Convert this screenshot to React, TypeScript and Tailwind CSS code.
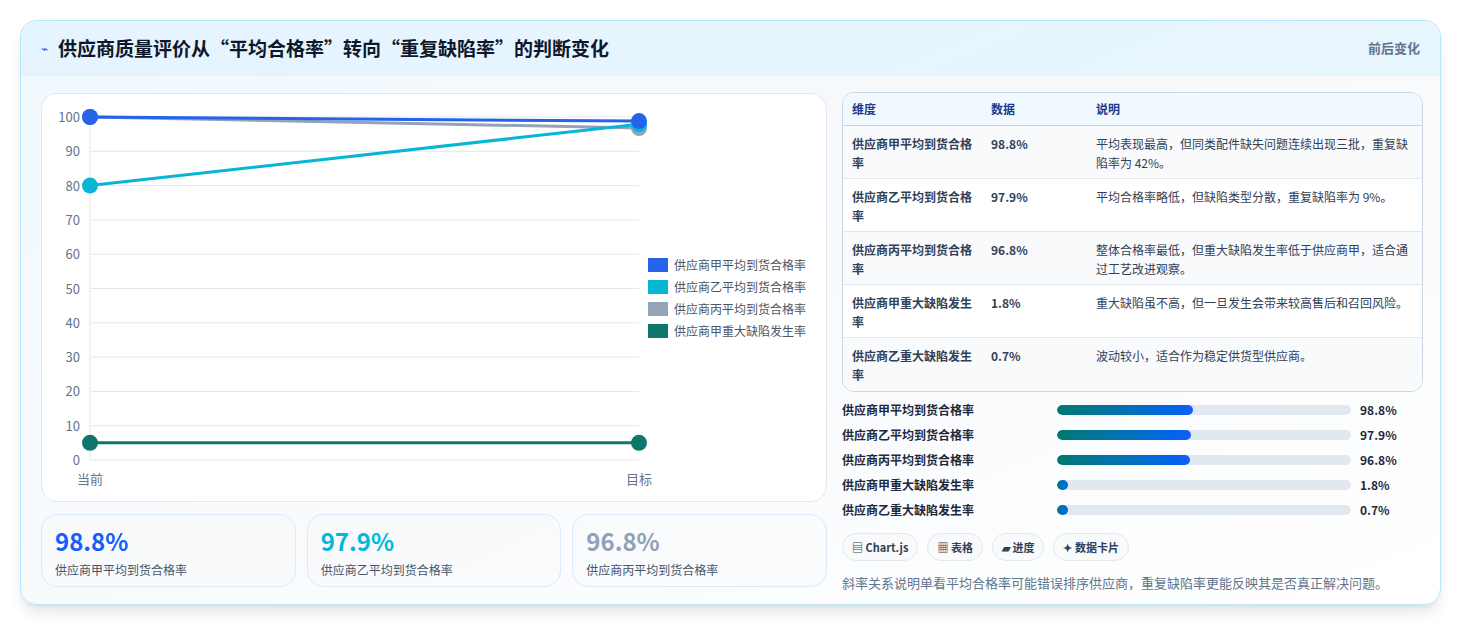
const FONT = { fontFamily: '"Noto Sans CJK SC", "Noto Sans", sans-serif' };

const rows = [
    { name: '供应商甲平均到货合格率', value: '98.8%', note: '平均表现最高，但同类配件缺失问题连续出现三批，重复缺陷率为 42%。' },
    { name: '供应商乙平均到货合格率', value: '97.9%', note: '平均合格率略低，但缺陷类型分散，重复缺陷率为 9%。' },
    { name: '供应商丙平均到货合格率', value: '96.8%', note: '整体合格率最低，但重大缺陷发生率低于供应商甲，适合通过工艺改进观察。' },
    { name: '供应商甲重大缺陷发生率', value: '1.8%', note: '重大缺陷虽不高，但一旦发生会带来较高售后和召回风险。' },
    { name: '供应商乙重大缺陷发生率', value: '0.7%', note: '波动较小，适合作为稳定供货型供应商。' },
];

const bars = [
    { name: '供应商甲平均到货合格率', value: '98.8%', w: 46.3 },
    { name: '供应商乙平均到货合格率', value: '97.9%', w: 45.6 },
    { name: '供应商丙平均到货合格率', value: '96.8%', w: 45.2 },
    { name: '供应商甲重大缺陷发生率', value: '1.8%', w: 3.8 },
    { name: '供应商乙重大缺陷发生率', value: '0.7%', w: 3.8 },
];

const legend = [
    { c: '#2563eb', t: '供应商甲平均到货合格率' },
    { c: '#06b6d4', t: '供应商乙平均到货合格率' },
    { c: '#94a3b8', t: '供应商丙平均到货合格率' },
    { c: '#0f766e', t: '供应商甲重大缺陷发生率' },
];

function Chart() {
    const x0 = 48, x1 = 597;
    const y = (v: number) => 366 - v * 3.43;
    return (
        <svg width="786" height="408" className="block">
            {[0, 10, 20, 30, 40, 50, 60, 70, 80, 90, 100].map(v => (
                <g key={v}>
                    <line x1={x0} x2={x1} y1={y(v)} y2={y(v)} stroke="#e5e7eb" />
                    <text x={x0 - 10} y={y(v) + 5} textAnchor="end" fontSize="13" fill="#64748b">{v}</text>
                </g>
            ))}
            <line x1={x0} x2={x0} y1={y(100)} y2={y(0)} stroke="#e5e7eb" />
            <text x={x0} y={390} textAnchor="middle" fontSize="13" fill="#64748b">当前</text>
            <text x={x1} y={390} textAnchor="middle" fontSize="13" fill="#64748b">目标</text>
            <line x1={x0} x2={x1} y1={y(100)} y2={y(96.8)} stroke="#94a3b8" strokeWidth="3" />
            <line x1={x0} x2={x1} y1={y(80)} y2={y(97.9)} stroke="#06b6d4" strokeWidth="3" />
            <line x1={x0} x2={x1} y1={y(100)} y2={y(98.8)} stroke="#2563eb" strokeWidth="3" />
            <line x1={x0} x2={x1} y1={y(5)} y2={y(5)} stroke="#0f766e" strokeWidth="3" />
            <circle cx={x1} cy={y(96.8)} r="8" fill="#94a3b8" />
            <circle cx={x1} cy={y(97.9)} r="8" fill="#06b6d4" />
            <circle cx={x0} cy={y(100)} r="8" fill="#94a3b8" />
            <circle cx={x0} cy={y(80)} r="8" fill="#06b6d4" />
            <circle cx={x0} cy={y(100)} r="8" fill="#2563eb" />
            <circle cx={x1} cy={y(98.8)} r="8" fill="#2563eb" />
            <circle cx={x0} cy={y(5)} r="8" fill="#0f766e" />
            <circle cx={x1} cy={y(5)} r="8" fill="#0f766e" />
            {legend.map((l, i) => (
                <g key={l.t}>
                    <rect x={606} y={164 + i * 22} width={20} height={14} fill={l.c} />
                    <text x={632} y={176 + i * 22} fontSize="12" fill="#4b5563">{l.t}</text>
                </g>
            ))}
        </svg>
    );
}

export default function App() {
    return (
        <div className="w-[1462px] h-[626px] bg-white pt-5 pl-5" style={FONT}>
            <div className="w-[1421px] h-[585px] rounded-2xl border border-sky-200 bg-gradient-to-br from-sky-50 via-slate-50 to-white shadow-lg overflow-hidden">
                <div className="h-[55px] flex items-center justify-between px-5 bg-sky-100/70 border-b border-sky-100">
                    <div className="flex items-center gap-2.5">
                        <span className="text-blue-600 text-xs">⌁</span>
                        <h1 className="text-[19px] font-bold text-slate-900">供应商质量评价从“平均合格率”转向“重复缺陷率”的判断变化</h1>
                    </div>
                    <span className="text-[13px] font-semibold text-slate-500">前后变化</span>
                </div>
                <div className="flex gap-[15px] pl-5 pt-[17px]">
                    <div className="w-[786px] flex flex-col gap-3">
                        <div className="h-[409px] bg-white rounded-2xl border border-slate-200 overflow-hidden">
                            <Chart />
                        </div>
                        <div className="grid grid-cols-3 gap-[11px]">
                            {[['98.8%', 'text-blue-600'], ['97.9%', 'text-cyan-500'], ['96.8%', 'text-slate-400']].map(([v, c], i) => (
                                <div key={v} className="h-[73px] rounded-2xl border border-blue-100 bg-slate-50/60 px-[13px] pt-2.5">
                                    <div className={`text-[24px] font-bold leading-8 ${c}`}>{v}</div>
                                    <div className="text-[12px] text-slate-600 mt-1">{rows[i].name}</div>
                                </div>
                            ))}
                        </div>
                    </div>
                    <div className="w-[581px] flex flex-col">
                        <div className="rounded-xl border border-slate-300 overflow-hidden -mt-px text-[12px]">
                            <div className="flex h-[33px] items-center bg-sky-50 border-b border-slate-300 font-semibold text-blue-900">
                                <div className="w-[148px] pl-[9px]">维度</div>
                                <div className="w-[105px]">数据</div>
                                <div className="flex-1">说明</div>
                            </div>
                            {rows.map((r, i) => (
                                <div key={r.name} className={`flex h-[53px] pt-2 leading-[19px] ${i % 2 ? 'bg-white' : 'bg-slate-50'} ${i < 4 ? 'border-b border-slate-200' : ''}`}>
                                    <div className="w-[148px] pl-[9px] pr-3 font-semibold text-slate-700">{r.name}</div>
                                    <div className="w-[105px] font-semibold text-slate-700">{r.value}</div>
                                    <div className="flex-1 pr-3 text-slate-700">{r.note}</div>
                                </div>
                            ))}
                        </div>
                        <div className="flex flex-col gap-[7px] mt-[9px]">
                            {bars.map(b => (
                                <div key={b.name} className="flex items-center h-[18px] text-[12px] font-semibold text-slate-800">
                                    <div className="w-[215px]">{b.name}</div>
                                    <div className="w-[294px] h-[10px] rounded-full bg-slate-200 overflow-hidden">
                                        <div className="h-full rounded-full bg-gradient-to-r from-teal-700 to-blue-600" style={{ width: `${b.w}%` }} />
                                    </div>
                                    <div className="ml-[9px]">{b.value}</div>
                                </div>
                            ))}
                        </div>
                        <div className="flex gap-[9px] mt-[14px] text-[11px] font-semibold text-slate-700">
                            {['▤ Chart.js', '▦ 表格', '▰ 进度', '✦ 数据卡片'].map(t => (
                                <span key={t} className="h-[28px] px-[9px] flex items-center rounded-full border border-slate-200 bg-slate-50">{t}</span>
                            ))}
                        </div>
                        <p className="mt-[12px] text-[13px] text-slate-500">斜率关系说明单看平均合格率可能错误排序供应商，重复缺陷率更能反映其是否真正解决问题。</p>
                    </div>
                </div>
            </div>
        </div>
    );
}
